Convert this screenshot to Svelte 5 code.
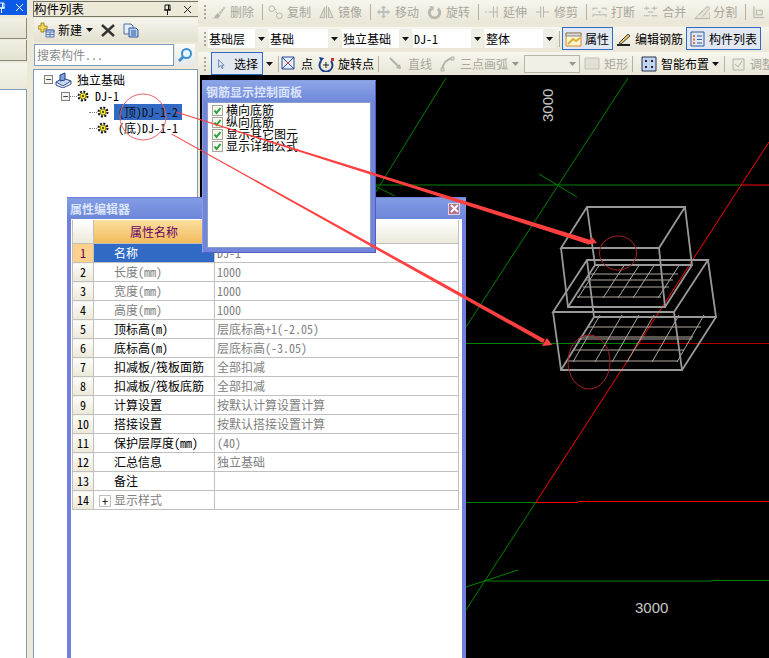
<script>
	const G = '#b4b2a6';
	const icons = {
		brush: [['M3 14 7 9l3 3-4 3.5z', G, 'none'], ['M8 9 14 2l1.5 1.5L10 11z', '#c9c7ba', 'none'], ['M1 15h8', 'none', '#d8d6c8']],
		copy: [['M1 4.5a3 3 0 1 0 6 0a3 3 0 1 0-6 0M9 12a3 3 0 1 0 6 0a3 3 0 1 0-6 0M7 5l2 1M8 8l2 1', 'none', G]],
		mirror: [['M1 14 6 3v11z', '#dedcce', G], ['M15 14 10 3v11z', '#dedcce', G], ['M8 1v14', 'none', G]],
		move: [['M8 1 5 4h2v3H4V5L1 8l3 3V9h3v3H5l3 3 3-3H9V9h3v2l3-3-3-3v2H9V4h2z', '#bcbfbf', 'none']],
		rotate: [['M4.5 4.5a5.5 5.5 0 1 0 7 0', 'none', '#b8b8ae', 3], ['M2 2h5v5z', '#b8b8ae', 'none']],
		extend: [['M1 8h2M5 8h4M10 2v12M14 2v12M10 8h4', 'none', G]],
		trim: [['M6 2v12M9 2v12M1 8h5M9 8h6', 'none', G]],
		split: [['M1 4h5M10 4h5M1 4v2M15 4v2M1 11h14M1 11v2M15 11v2M7 7l1 2 1-2', 'none', G]],
		merge: [['M1 4h6M9 4h6M1 12h6M9 12h6M5 8h6M4 2v4M12 2v4', 'none', G]],
		cut: [['M1 15h16V8M1 15 9 7M5 11l9-9 3 2-8 9', '#e4e2d4', G]],
		adjust: [['M3 2v12h11M6 6h6v5H6z', '#e4e2d4', G]],
		line: [['M2 2 12 12', 'none', G, 2], ['M13 13 8 12l4-4z', G, 'none']],
		arc: [['M2 14C3 7 7 3 13 2', 'none', G, 2], ['M1 12h3v3H1zM11 1h3v3h-3z', '#dedcce', G]],
		rect: [['M1 2h14v11H1z', '#e2e0d4', '#c4c2b6']],
		smart: [['M1 1h14v14H1z', '#c4d4ec', '#223355'], ['M4 4h2v2H4zM10 4h2v2h-2zM4 10h2v2H4zM10 10h2v2h-2z', '#223', 'none']],
		tune: [['M3 3h11v11H3z', '#eceadc', G], ['M5 8l3 3 4-6', 'none', G]],
		point: [['M1 1h12v12H1z', '#e8ecf8', '#2a4a9a'], ['M1 1l12 12M13 1 1 13', 'none', '#2a4a9a'], ['M6 6h2v2H6z', '#e03030', 'none']],
		spin: [['M3 5a6.5 6.5 0 1 0 10 0', 'none', '#1c3f8c', 2], ['M1 1l5 1-3 4z', '#1c3f8c', 'none'], ['M5 9h6M8 6v6', 'none', '#222'], ['M13 2h3v3h-3z', '#d03030', 'none']],
		cursor: [['M5 2v11l3-2.5 2 4 1.5-.8-2-3.8H13z', '#dfe6f4', '#4a6aa0']],
		prop: [['M1 2h15v13H1z', '#fdf4d0', '#e08a20'], ['M1 2h15v3H1z', '#d8d8d0', '#888'], ['M3 13l5-5 3 2 4-3', 'none', '#d8b030', 2]],
		edit: [['M2 14h13', 'none', '#222', 2], ['M4 12l9-9 2 2-9 8z', '#e9c35a', '#444']],
		list: [['M2 1h13v14H2z', '#dfe8f6', '#3a5a9a'], ['M4 4h2v2H4zM4 7.5h2v2H4zM4 11h2v2H4z', '#e07030', 'none'], ['M8 5h5M8 8.5h5M8 12h5', 'none', '#3a5a9a']]
	};

	const row1 = [
		{ icon: 'brush', label: '删除' }, 'sep',
		{ icon: 'copy', label: '复制' }, { icon: 'mirror', label: '镜像' }, 'sep',
		{ icon: 'move', label: '移动' }, { icon: 'rotate', label: '旋转' }, 'sep',
		{ icon: 'extend', label: '延伸' }, { icon: 'trim', label: '修剪' }, 'sep',
		{ icon: 'split', label: '打断' }, { icon: 'merge', label: '合并' }, { icon: 'cut', label: '分割' }, 'sep',
		{ icon: 'adjust', label: '' }
	];
	const selects = [
		{ text: '基础层', w: 47 },
		{ text: '基础', w: 59 },
		{ text: '独立基础', w: 57 },
		{ text: 'DJ-1', w: 58 },
		{ text: '整体', w: 58 }
	];

	const props = [
		['名称', 'DJ-1', 'sel'],
		['长度(mm)', '1000', 'dim'],
		['宽度(mm)', '1000', 'dim'],
		['高度(mm)', '1000', 'dim'],
		['顶标高(m)', '层底标高+1(-2.05)', ''],
		['底标高(m)', '层底标高(-3.05)', ''],
		['扣减板/筏板面筋', '全部扣减', ''],
		['扣减板/筏板底筋', '全部扣减', ''],
		['计算设置', '按默认计算设置计算', ''],
		['搭接设置', '按默认搭接设置计算', ''],
		['保护层厚度(mm)', '(40)', ''],
		['汇总信息', '独立基础', ''],
		['备注', '', ''],
		['显示样式', '', 'dim plus']
	];
	const toggles = ['横向底筋', '纵向底筋', '显示其它图元', '显示详细公式'];

	// 3d boxes, page coordinates
	const boxTop = 'M587 207H685L659 248H561ZM561 248 568 307H665L659 248M587 207 595 265H692L685 207M568 307 595 265M665 307 692 265';
	const boxLow = 'M587 260H708L674 312H553ZM553 312 561 370H682L674 312M587 260 594 317H716L708 260M561 370 594 317M682 370 716 317';
	const barsTopD = [578, 603, 618, 633, 658];
	const barsLowD = [573, 595, 612, 627, 652, 677];
</script>

{#snippet ico(name)}
	<svg class="ico" viewBox="0 0 17 16" width="17" height="16">
		{#each icons[name] as [d, fill, stroke, sw]}
			<path {d} {fill} {stroke} stroke-width={sw || 1} />
		{/each}
	</svg>
{/snippet}

{#snippet gear()}
	<svg viewBox="0 0 12 12" width="12" height="12">
		<circle cx="6" cy="6" r="4.5" fill="none" stroke="#111" stroke-width="2" stroke-dasharray="2 1.5" />
		<circle cx="6" cy="6" r="3" fill="#ffe800" stroke="#333" stroke-width="0.6" />
		<circle cx="6" cy="6" r="1" fill="#222" />
	</svg>
{/snippet}

{#snippet arrow()}
	<svg class="caret" viewBox="0 0 7 4" width="7" height="4"><path d="M0 0h7L3.5 4z" fill="#111" /></svg>
{/snippet}

<div class="app">
	<div class="strip">
		<div class="strip-title">
			<svg viewBox="0 0 9 11" width="9" height="11"><path d="M2 1h5v5H2zM1 6h7M4.5 6v5M5.5 1v5" fill="none" stroke="#fff" /></svg>
			<svg viewBox="0 0 9 9" width="9" height="9"><path d="M1 1l7 7M8 1 1 8" stroke="#fff" /></svg>
		</div>
		<div class="strip-btn"></div>
		<div class="strip-btn"></div>
		<div class="strip-tab"></div>
		<div class="strip-body"></div>
	</div>

	<div class="list-panel">
		<div class="panel-title">
			<span>构件列表</span>
			<svg viewBox="0 0 9 11" width="9" height="11"><path d="M2 1h5v5H2zM1 6h7M4.5 6v5M5.5 1v5" fill="none" stroke="#111" /></svg>
			<svg class="close" viewBox="0 0 9 9" width="9" height="9"><path d="M1 1l7 7M8 1 1 8" stroke="#222" /></svg>
		</div>
		<div class="list-tools">
			<svg viewBox="0 0 17 16" width="17" height="16">
				<path d="M3 1h3v3h3v3H6v3H3V7H0V4h3z" fill="#f4d860" stroke="#a08820" />
				<path d="M8 8h8v7H8z" fill="#d8e4f6" stroke="#5a7ab0" />
				<path d="M8 8h8v2H8zM12 10v5M8 12.5h8" fill="none" stroke="#5a7ab0" />
			</svg>
			<span class="new-label">新建</span>
			{@render arrow()}
			<svg class="del" viewBox="0 0 14 13" width="14" height="13"><path d="M1 1l12 11M13 1 1 12" stroke="#333" stroke-width="2.4" /></svg>
			<svg class="dup" viewBox="0 0 16 15" width="16" height="15">
				<path d="M1 1h7l2 2v8H1z" fill="#e6eefa" stroke="#4a6ea8" />
				<path d="M6 5h7l2 2v7H6z" fill="#bcd0ee" stroke="#2a58a0" />
				<path d="M8 8h5M8 10h5M8 12h5" stroke="#2a58a0" />
			</svg>
		</div>
		<div class="search">
			<div class="search-input">搜索构件...</div>
			<div class="search-btn">
				<svg viewBox="0 0 16 16" width="16" height="16">
					<circle cx="9.5" cy="6.5" r="4.5" fill="#e8f4fc" stroke="#3a90d0" stroke-width="2" />
					<path d="M6 10l-4 4" stroke="#3a90d0" stroke-width="3" />
				</svg>
			</div>
		</div>
		<div class="tree">
			<div class="node root">
				<span class="box">−</span>
				<svg viewBox="0 0 17 16" width="17" height="16">
					<path d="M1 10l7-4 8 3-8 5z" fill="#c8d8f0" stroke="#2a4a90" />
					<path d="M5 3l5-2v7l-5 1z" fill="#7fa0dc" stroke="#1f3f8a" />
					<path d="M1 10v3l7 3 8-4V9" fill="none" stroke="#2a4a90" />
				</svg>
				<span>独立基础</span>
			</div>
			<div class="node lvl1">
				<span class="box">−</span>
				<i class="dots"></i>
				{@render gear()}
				<span class="dj">DJ-1</span>
			</div>
			<div class="node lvl2">
				<i class="dots"></i>
				{@render gear()}
				<span class="leaf picked">(顶)DJ-1-2</span>
			</div>
			<div class="node lvl2">
				<i class="dots"></i>
				{@render gear()}
				<span class="leaf">(底)DJ-1-1</span>
			</div>
		</div>
	</div>

	<div class="main">
		<div class="bar bar1">
			<i class="grip"></i>
			{#each row1 as item}
				{#if item === 'sep'}
					<i class="sep"></i>
				{:else}
					<span class="tool off">{@render ico(item.icon)}{item.label}</span>
				{/if}
			{/each}
		</div>
		<div class="bar bar2">
			<i class="grip"></i>
			{#each selects as s}
				<div class="select">
					<span class="select-text" style="width: {s.w}px">{s.text}</span>
					<span class="select-btn">{@render arrow()}</span>
				</div>
			{/each}
			<i class="sep sep2"></i>
			<span class="tool on">{@render ico('prop')}属性</span>
			<span class="tool plain">{@render ico('edit')}编辑钢筋</span>
			<span class="tool on">{@render ico('list')}构件列表</span>
		</div>
		<div class="bar bar3">
			<i class="grip"></i>
			<span class="tool on pick">{@render ico('cursor')}选择</span>
			<span class="drop">{@render arrow()}</span>
			<i class="sep"></i>
			<span class="tool">{@render ico('point')}点</span>
			<span class="tool">{@render ico('spin')}旋转点</span>
			<i class="sep"></i>
			<span class="tool off line">{@render ico('line')}直线</span>
			<span class="tool off arc">{@render ico('arc')}三点画弧</span>
			<span class="drop off-caret">{@render arrow()}</span>
			<div class="mini-select">{@render arrow()}</div>
			<span class="tool off">{@render ico('rect')}矩形</span>
			<i class="sep"></i>
			<span class="tool smart">{@render ico('smart')}智能布置</span>
			<span class="drop">{@render arrow()}</span>
			<i class="sep"></i>
			<span class="tool off tune">{@render ico('tune')}调整</span>
		</div>

		<svg class="canvas" viewBox="200 75 569 583" width="569" height="583">
			<g fill="none" stroke="#008000">
				<path d="M446 78 300 315M628 78 466 327M539 174 577 197M375 185H741M375 186 395 196M466 502.5H536M466 610 536 502M484 581H712M712 580.5H769M466 587 518 570M466 343.5H640" />
			</g>
			<g fill="none" stroke="#f00">
				<path d="M769 142 536 502M741 185H769M536 502.5H578M578 501.5H769" />
				<path d="M640 343.5H769" stroke="#b40000" />
			</g>
			<g stroke="#b0a89f" fill="none">
				<path d="M590 274H678M586 280H673M583 287H669M577 297H661" />
				{#each barsTopD as x}
					<path d="M{x} 298 {x + 22} 264" />
				{/each}
				<path d="M587 327H701M580 337H693M578 339H692M573 350H684M568 361H678" />
				{#each barsLowD as x}
					<path d="M{x} 362 {x + 27} 315" />
				{/each}
			</g>
			<g fill="none" stroke="#999" stroke-width="1.8">
				<path d={boxTop} />
				<path d={boxLow} />
			</g>
			<text class="dim-v" transform="translate(553 122) rotate(-90)">3000</text>
			<text class="dim-h" x="635" y="613">3000</text>
		</svg>
	</div>

	<div class="win props">
		<div class="win-title">
			<span>属性编辑器</span>
			<span class="win-x">
				<svg viewBox="0 0 9 9" width="9" height="9"><path d="M1 1l7 7M8 1 1 8" stroke="#fff" stroke-width="2" /></svg>
			</span>
		</div>
		<table>
			<thead>
				<tr>
					<th class="idx"></th>
					<th class="name-head">属性名称</th>
					<th class="value-head"></th>
				</tr>
			</thead>
			<tbody>
				{#each props as [name, value, kind], i}
					<tr class={kind}>
						<td class="idx">{i + 1}</td>
						<td class="name">
							{#if kind.includes('plus')}<span class="plus-box">+</span>{/if}{name}
						</td>
						<td class="value">{value}</td>
					</tr>
				{/each}
			</tbody>
		</table>
	</div>

	<div class="win panel">
		<div class="win-title">钢筋显示控制面板</div>
		<div class="toggles">
			{#each toggles as t}
				<div class="toggle">
					<span class="check">
						<svg viewBox="0 0 9 9" width="9" height="9"><path d="M1.5 4.5l2 2.5 4-5" fill="none" stroke="#22a030" stroke-width="2" /></svg>
					</span>
					{t}
				</div>
			{/each}
		</div>
	</div>

	<svg class="notes" viewBox="0 0 769 658" width="769" height="658">
		<polygon points="176,111.6 176,112.4 589,244.4 590.6,240" fill="#ff4040" />
		<polygon points="597,243 592,237 587,244.5" fill="#ff4040" />
		<polygon points="171.5,133.6 171.5,134.4 543,343 545,339.5" fill="#ff4040" />
		<polygon points="552,345 547,338 542,346" fill="#ff4040" />
		<circle cx="143" cy="117" r="23" fill="none" stroke="#e8606c" />
		<ellipse cx="618" cy="253" rx="18.5" ry="17" fill="none" stroke="#a82028" />
		<ellipse cx="589" cy="362" rx="21" ry="27" fill="none" stroke="#a82028" />
	</svg>
</div>

<style>
	:global(body) {
		margin: 0;
		overflow: hidden;
	}

	.app {
		position: relative;
		width: 769px;
		height: 658px;
		overflow: hidden;
		display: flex;
		background: #ece9d8;
		font: 12px/16px "Noto Sans CJK SC", sans-serif;
		font-feature-settings: "hwid";
		color: #000;
	}

	/* left edge of the app */
	.strip {
		width: 27px;
		flex: none;
		margin-right: 6px;
		display: flex;
		flex-direction: column;
	}

	.strip-title {
		height: 15px;
		margin-bottom: 3px;
		background: #0a5ae6;
		display: flex;
		justify-content: space-between;
		align-items: center;
		padding-right: 3px;
		overflow: hidden;
	}

	.strip-title svg:first-child {
		margin-left: -3px;
	}

	.strip-btn {
		height: 20px;
		margin-bottom: 1px;
		background: linear-gradient(#f2f0e4, #e4e1d0);
		border-bottom: 1px solid #8a887c;
		border-right: 1px solid #8a887c;
	}

	.strip-tab {
		height: 26px;
		margin-top: 1px;
		background: linear-gradient(#f6f5ec, #ebe8d9);
	}

	.strip-body {
		flex: 1;
		background: #fff;
		border-top: 1px solid #7f9db9;
		border-right: 1px solid #7f9db9;
	}

	/* component list */
	.list-panel {
		width: 165px;
		flex: none;
		display: flex;
		flex-direction: column;
	}

	.panel-title {
		height: 14px;
		margin-top: 1px;
		border: 1px solid #77756a;
		border-width: 1px 0 1px 1px;
		display: flex;
		align-items: center;
		font-size: 12.5px;
		line-height: 14px;
		padding-right: 6px;
	}

	.panel-title span {
		flex: 1;
	}

	.panel-title .close {
		margin-left: 11px;
	}

	.list-tools {
		height: 24px;
		margin: 1px 0 2px 1px;
		display: flex;
		align-items: center;
		padding-left: 4px;
		background: linear-gradient(#f6f5ee, #e3e0cf);
	}

	.new-label {
		margin: 0 4px 0 3px;
	}

	.del,
	.dup {
		margin-left: 8px;
	}

	.search {
		display: flex;
		height: 22px;
		margin-left: 1px;
		gap: 1px;
	}

	.search-input {
		width: 136px;
		border: 1px solid #7f9db9;
		background: #fff;
		color: #8a8a8a;
		padding-left: 2px;
		line-height: 20px;
	}

	.search-btn {
		width: 20px;
		background: linear-gradient(#fbfbf6, #e4e8ec);
		display: flex;
		align-items: center;
		justify-content: center;
	}

	.tree {
		flex: 1;
		margin-top: 3px;
		background: #fff;
		border: 1px solid #7f9db9;
		border-width: 1px 1px 0;
		padding-top: 1px;
	}

	.node {
		display: flex;
		align-items: center;
		height: 16px;
	}

	.root {
		padding-left: 10px;
		gap: 2px;
		height: 17px;
	}

	.root svg {
		margin-right: 3px;
	}

	.box {
		width: 7px;
		height: 7px;
		border: 1px solid #808080;
		font-size: 10px;
		line-height: 6px;
		text-align: center;
		background: #f4f3ec;
		flex: none;
	}

	.lvl1 {
		padding-left: 27px;
	}

	.dots {
		border-top: 1px dotted #808080;
		width: 7px;
		flex: none;
	}

	.dj {
		margin-left: 6px;
	}

	.lvl2 {
		padding-left: 55px;
	}

	.lvl2 .dots {
		width: 8px;
	}

	.leaf {
		margin-left: 5px;
		padding: 0 4px 0 4px;
		line-height: 16px;
	}

	.picked {
		background: #316ac5;
		color: #111;
	}

	/* toolbars */
	.main {
		flex: 1;
		min-width: 0;
		display: flex;
		flex-direction: column;
	}

	.bar {
		display: flex;
		align-items: center;
		white-space: nowrap;
		overflow: hidden;
		padding-left: 6px;
		background: linear-gradient(#f7f6ee, #e9e6d6);
	}

	.bar1 {
		height: 24px;
		gap: 8px;
		margin-bottom: 3px;
	}

	.bar1 .ico {
		width: 16px;
	}

	.bar1 .sep {
		margin: 0 -3px 0 0;
	}

	.bar2 {
		height: 23px;
		margin-bottom: 2px;
		gap: 3px;
	}

	.bar3 {
		height: 23px;
		gap: 5px;
	}

	.grip {
		width: 2px;
		height: 14px;
		flex: none;
		background: repeating-linear-gradient(#a8a698 0 2px, transparent 2px 4px);
		margin-right: -3px;
	}

	.bar2 .grip,
	.bar3 .grip {
		margin-right: -1px;
	}

	.sep {
		width: 1px;
		height: 16px;
		flex: none;
		background: #b4b2a4;
		margin: 0 -3px 0 -1px;
	}

	.tool {
		display: flex;
		align-items: center;
		gap: 3px;
		flex: none;
	}

	.off {
		color: #a8a79c;
	}

	.on {
		height: 21px;
		border: 1px solid #316ac5;
		background: #e2e8f2;
		padding: 0 3px 0 2px;
	}

	.plain {
		margin: 0 0 0 -1px;
	}

	.pick {
		width: 43px;
		gap: 7px;
		margin-left: 1px;
		padding: 0 4px 0 3px;
	}

	.line {
		margin-left: 7px;
	}

	.arc {
		margin-left: 3px;
	}

	.smart {
		margin-left: 6px;
	}

	.tune {
		margin-left: 3px;
	}

	.drop {
		display: flex;
		margin: 0 1px 0 -2px;
		flex: none;
	}

	.off-caret {
		opacity: 0.4;
		margin: 0;
		margin-left: -1px;
	}

	.select {
		display: flex;
		height: 19px;
		flex: none;
		margin-right: -1px;
	}

	.select-text {
		background: #fff;
		padding-left: 1px;
		line-height: 19px;
		box-sizing: border-box;
	}

	.select-btn {
		width: 12px;
		display: flex;
		align-items: center;
		justify-content: center;
		background: #efeee4;
	}

	.sep2 {
		margin: 0 -1px 0 2px;
	}

	.mini-select {
		width: 56px;
		height: 18px;
		flex: none;
		margin-right: -1px;
		border: 1px solid #b8b6a8;
		background: #f2f0e4;
		display: flex;
		align-items: center;
		justify-content: flex-end;
		padding-right: 3px;
		box-sizing: border-box;
	}

	.mini-select .caret {
		opacity: 0.4;
	}

	.canvas {
		display: block;
		flex: none;
		margin-left: 2px;
		background: #000;
	}

	.dim-v,
	.dim-h {
		font: 15px "Liberation Sans", sans-serif;
		fill: #c8c8c8;
	}

	/* floating windows */
	.win {
		position: absolute;
		box-sizing: border-box;
		background: #fff;
	}

	.win-title {
		background: linear-gradient(#829ce4, #6d86d8);
		color: #dbe4fa;
		font-weight: 700;
		display: flex;
		justify-content: space-between;
		align-items: center;
	}

	.props {
		left: 67px;
		top: 197px;
		width: 399px;
		height: 470px;
		border: solid #7080dc;
		border-width: 1px 4px 0;
	}

	.props .win-title {
		height: 21px;
		margin: 0 -4px;
		padding: 0 6px 0 3px;
	}

	.win-x {
		width: 12px;
		height: 12px;
		background: #b4708c;
		border: 1px solid #dfd4e4;
		box-sizing: border-box;
		display: flex;
		align-items: center;
		justify-content: center;
	}

	table {
		border-collapse: collapse;
		table-layout: fixed;
		width: 387px;
		margin: 1px 0 0 1px;
		color: #000;
	}

	th,
	td {
		padding: 0;
		border: 1px solid #c0c0c0;
		height: 18px;
		box-sizing: content-box;
		font-weight: 400;
		line-height: 16px;
		overflow: hidden;
		white-space: nowrap;
	}

	th {
		height: 23px;
		border-top: 0;
	}

	th.idx,
	.value-head {
		background: linear-gradient(#fff, #ece9d8);
	}

	.idx {
		width: 20px;
		text-align: center;
		background: linear-gradient(#fdfdf9, #ece9d8);
	}

	.name-head {
		width: 120px;
		color: #660066;
		background: linear-gradient(#fbdf9f, #f3ba5c);
	}

	.name {
		width: 120px;
		padding-left: 20px;
		box-sizing: border-box;
	}

	.value {
		color: #808080;
		padding-left: 2px;
		box-sizing: border-box;
	}

	.sel .idx {
		background: #fdd18c;
		color: #660066;
	}

	.sel .name {
		background: #316ac5;
		color: #fff;
	}

	.dim .name {
		color: #808080;
	}

	.plus-box {
		position: absolute;
		left: 28px;
		width: 10px;
		height: 10px;
		margin-top: 3px;
		border: 1px solid #c0c0c0;
		color: #000;
		text-align: center;
		line-height: 9px;
	}

	.panel {
		left: 202px;
		top: 80px;
		width: 174px;
		height: 173px;
		background: #7385db;
		border: 1px solid #4f5ec0;
		border-top-color: #8a9ee4;
		border-left-color: #8a9ee4;
		padding: 0 4px 4px;
		display: flex;
		flex-direction: column;
	}

	.panel .win-title {
		height: 21px;
		margin: 0 -4px;
		padding-left: 3px;
		background: linear-gradient(#8ca5e6, #6f88da);
	}

	.toggles {
		flex: 1;
		background: #fff;
		border: 1px solid #8aa0c0;
		box-shadow: inset 0 0 0 1px #fff;
		padding: 1px 0 0 4px;
	}

	.toggle {
		display: flex;
		align-items: center;
		gap: 3px;
		height: 12px;
		line-height: 12px;
	}

	.check {
		width: 9px;
		height: 9px;
		border: 1px solid #a8a698;
		background: #f6f6f0;
		display: flex;
	}

	.notes {
		position: absolute;
		left: 0;
		top: 0;
		pointer-events: none;
	}
</style>
